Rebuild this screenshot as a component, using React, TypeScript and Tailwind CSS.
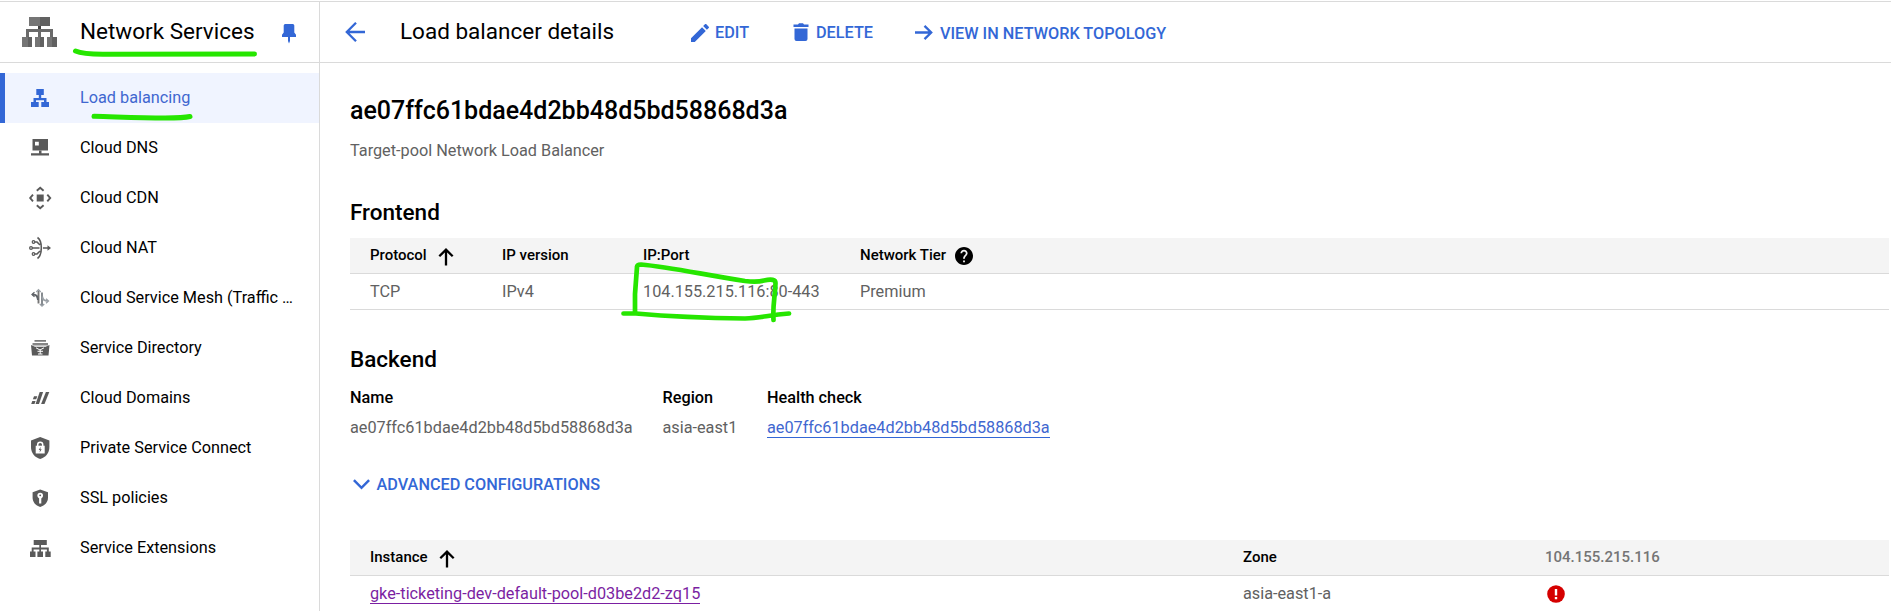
import type { ReactNode } from "react";

const GREY = "#5a5a5a";

function HeaderLogo() {
  return (
    <svg width="36" height="32" viewBox="0 0 36 32" shapeRendering="crispEdges">
      <path d="M6.500 1H17.500V10H6.500z" fill="#757575" />
      <path d="M17.500 1H28V10H17.500z" fill="#616161" />
      <path d="M16 10h3v3h-3z" fill="#424242" />
      <path d="M4 13h27v8h-3v-5H19v5h-3v-5H7v5H4z" fill="#6a6a6a" />
      <path d="M0 21h6v10H0zM13 21h5v10H13zM25 21h5v10H25z" fill="#757575" />
      <path d="M6 21h4v10H6zM18 21h4v10H18zM30 21h5v10H30z" fill="#616161" />
    </svg>
  );
}

function PinIcon() {
  return (
    <svg width="14" height="20" viewBox="0 0 14 20" fill="#3367d6">
      <path d="M3.200 0H10.800Q12.300 0 12.300 1.500V8.500L14 10.700V13H8V17L7 19.500L6 17V13H0V10.700L1.700 8.500V1.500Q1.700 0 3.200 0z" />
    </svg>
  );
}

function Glyph({ children }: { children: ReactNode }) {
  return (
    <svg className="shrink-0" width="24" height="24" viewBox="0 0 24 24" fill={GREY}>
      {children}
    </svg>
  );
}

const items: { label: string; icon: ReactNode }[] = [
  {
    label: "Load balancing",
    icon: (
      <g fill="#3367d6">
        <path d="M8.300 3h7.500v6H13.200v3h5.300v4h2.500v5h-7.700v-5h2.700v-1.800H8V16h2.700v5H3v-5h2.500v-4h5.300V9H8.300z" />
      </g>
    ),
  },
  {
    label: "Cloud DNS",
    icon: (
      <>
        <path fillRule="evenodd" d="M4.500 3h15.500v11.500H4.500zM7 5.700v3.800h3.800V5.700z" />
        <path d="M11 14.500h2.500V17.300H21v2.200H3v-2.200h8z" />
      </>
    ),
  },
  {
    label: "Cloud CDN",
    icon: (
      <>
        <path d="M8.700 8.500h7v7h-7z" />
        <path d="M8.800 4.800L12.200 1.800L15.600 4.800M8.800 19.200l3.400 3L15.600 19.200M5 8.700L2.200 12L5 15.300M19.300 8.700L22.200 12L19.300 15.300" fill="none" stroke={GREY} strokeWidth="1.900" />
      </>
    ),
  },
  {
    label: "Cloud NAT",
    icon: (
      <>
        <path d="M9.500 1.500C14.600 5 14.600 19 9.500 22.500M3 12H11.500M15 12h6M5.500 6H9l3 3M5.500 18H9l3-3" fill="none" stroke={GREY} strokeWidth="1.600" />
        <path d="M19.500 9.300l3.500 2.700-3.500 2.700z" />
        <circle cx="3" cy="12" r="2" />
        <circle cx="5.500" cy="6" r="1.900" />
        <circle cx="5.500" cy="18" r="1.900" />
        <circle cx="3" cy="12" r="0.700" fill="#fff" />
        <circle cx="5.500" cy="6" r="0.700" fill="#fff" />
        <circle cx="5.500" cy="18" r="0.700" fill="#fff" />
      </>
    ),
  },
  {
    label: "Cloud Service Mesh (Traffic …",
    icon: (
      <g fill="none" strokeWidth="1.900">
        <path d="M10.500 4.500V17.500" stroke="#757575" />
        <path d="M8.300 6l2.200-2.300L12.700 6" stroke="#9aa0a6" strokeWidth="1.300" />
        <path d="M4.500 8.500C8.500 8.500 9.500 10 10 14" stroke="#5f6368" />
        <path d="M6.500 6.300L4 8.500l2.500 2.300" stroke="#5f6368" strokeWidth="1.300" />
        <path d="M14 6.500V19.500" stroke="#80868b" />
        <path d="M11.800 18L14 20.200 16.200 18" stroke="#9aa0a6" strokeWidth="1.300" />
        <path d="M14.300 10.500C14.500 13.500 16.500 15 20 15" stroke="#9aa0a6" />
        <path d="M18 12.700L20.500 15 18 17.200" stroke="#9aa0a6" strokeWidth="1.300" />
      </g>
    ),
  },
  {
    label: "Service Directory",
    icon: (
      <>
        <path d="M6.500 4.200h11.500v1.400H6.500z" />
        <path d="M4.500 7h15.500v2.500H4.500z" fill="#858585" />
        <path d="M3 9l4 1.700h10.500L21.500 9l-1 10.500H4z" />
        <path d="M8 11.800l4 2.200 4-2.200M9.500 15.300h5.500M10 18h4.500M12.200 13.500v4.500" fill="none" stroke="#fff" strokeWidth="1" />
      </>
    ),
  },
  {
    label: "Cloud Domains",
    icon: (
      <>
        <path d="M11.700 6h3.400L11 18H7.600z" />
        <path d="M17.900 6h3.400L16.500 18h-3.400z" />
        <path d="M6 10.200h3.300L8.200 13.200H4.900zM4.300 15h3.300L6.500 18H3.200z" />
      </>
    ),
  },
  {
    label: "Private Service Connect",
    icon: (
      <>
        <path d="M12.200 1L21.400 4.500V11C21.400 17 17.500 21.500 12.200 23C6.800 21.500 3 17 3 11V4.500z" />
        <path d="M7.700 9.700h9v7.800h-9z" fill="#fff" />
        <path d="M9.700 10V8.500C9.700 5.500 14.700 5.500 14.700 8.500V10" fill="none" stroke="#fff" strokeWidth="1.500" />
        <path d="M12.700 10.700L10.700 14h1.300l-.4 2.600L13.700 13.200h-1.300z" />
      </>
    ),
  },
  {
    label: "SSL policies",
    icon: (
      <>
        <path d="M12.200 3.500L20 6.300V11.500C20 16 17 19.600 12.200 21C7.400 19.600 4.600 16 4.600 11.500V6.300z" />
        <circle cx="12.200" cy="9.600" r="2.800" fill="#fff" />
        <path d="M11.100 10h2.200v7.500h-2.200z" fill="#fff" />
        <circle cx="12.200" cy="9.300" r="0.900" />
      </>
    ),
  },
  {
    label: "Service Extensions",
    icon: (
      <path d="M5.700 4H18.800v5H13v2.500h7.800v4h1.900V21h-5.400v-5.500h1.600v-2H13v2h2V21H9.400v-5.500h1.900v-2H5.600v2h1.900V21H2v-5.500h1.700v-4h7.600V9H5.700z" />
    ),
  },
];

function UpArrow() {
  return (
    <svg width="16" height="18" viewBox="0 0 16 18" fill="none" stroke="#000" strokeWidth="2.300">
      <path d="M8 17.500V2M1.300 8.300L8 1.700L14.700 8.300" />
    </svg>
  );
}

function HelpIcon() {
  return (
    <svg width="18" height="18" viewBox="2 2 20 20">
      <path d="M12 2C6.480 2 2 6.480 2 12s4.480 10 10 10 10-4.480 10-10S17.520 2 12 2zm1 17h-2v-2h2v2zm2.070-7.750l-.9.920C13.450 12.900 13 13.500 13 15h-2v-.5c0-1.100.45-2.100 1.170-2.830l1.240-1.260c.37-.36.59-.86.59-1.410 0-1.100-.9-2-2-2s-2 .9-2 2H8c0-2.210 1.790-4 4-4s4 1.790 4 4c0 .88-.36 1.680-.93 2.250z" />
    </svg>
  );
}

function Sidebar() {
  return (
    <nav className="w-80 shrink-0 border-r border-[#dadada]">
      <div className="flex h-[61px] items-start border-b border-[#dadada]">
        <div className="ml-[22px] mt-[14px] w-[58px]">
          <HeaderLogo />
        </div>
        <h1 className="mt-[13px] w-[203px] text-[22.5px] leading-8">Network Services</h1>
        <div className="-ml-px mt-[22px]">
          <PinIcon />
        </div>
      </div>
      <ul className="pt-2.5">
        {items.map((it, i) => (
          <li
            key={it.label}
            className={
              i === 0
                ? "flex h-[50px] items-center border-l-[5px] border-[#3367d6] bg-[#f0f4ff] pl-[23px] text-[#3f67d0]"
                : "flex h-[50px] items-center pl-7"
            }
          >
            <Glyph>{it.icon}</Glyph>
            <span className="ml-7 whitespace-nowrap">{it.label}</span>
          </li>
        ))}
      </ul>
    </nav>
  );
}

function Toolbar() {
  return (
    <header className="flex h-[61px] border-b border-[#dadada] font-medium text-[#3367d6]">
      <svg className="ml-[25px] mt-5" width="20" height="20" viewBox="0 0 20 20" fill="none" stroke="#3367d6" strokeWidth="2.300">
        <path d="M20 10H2M11 .8L1.800 10L11 19.200" />
      </svg>
      <h2 className="ml-[35px] mt-[13px] w-[291px] text-[22.5px] leading-8 font-normal text-black">Load balancer details</h2>
      <svg className="mt-[22px]" width="18" height="18" viewBox="3 3 18 18" fill="#3367d6">
        <path d="M3 17.250V21h3.750L17.810 9.940l-3.750-3.750L3 17.250zM20.710 7.040c.39-.39.39-1.020 0-1.410l-2.340-2.340c-.39-.39-1.020-.39-1.410 0l-1.830 1.830 3.750 3.750 1.830-1.830z" />
      </svg>
      <span className="ml-1.5 mt-[21px] w-[78px] leading-5">EDIT</span>
      <svg className="mt-[21px]" width="16" height="18" viewBox="0 0 16 18" fill="#3367d6">
        <path d="M1.500 5.500h13V16q0 2-2 2h-9q-2 0-2-2zM.5 1.500h4.500l1-1.200h4l1 1.200H15.500V4H.5z" />
      </svg>
      <span className="ml-[7px] mt-[21px] w-[99px] leading-5">DELETE</span>
      <svg className="mt-[23px]" width="18" height="15" viewBox="0 0 18 15" fill="none" stroke="#3367d6" strokeWidth="2.300">
        <path d="M0 7.500H16M9.500 .9L16.200 7.500L9.500 14.100" />
      </svg>
      <span className="ml-[7px] mt-[22px] leading-5">VIEW IN NETWORK TOPOLOGY</span>
    </header>
  );
}

function Marks() {
  return (
    <svg className="pointer-events-none absolute left-0 top-0" width="900" height="340" fill="none" stroke="#26e600" strokeWidth="5" strokeLinecap="round" strokeLinejoin="round">
      <path d="M75.500 51C81 53.500 92 54.300 105 54.200L254.500 54" />
      <path d="M94 116.300C120 117 140 118 165 118C178 118 184 118 190 116.500" />
      <path strokeWidth="4.700" d="M635 312V294L637 267Q637 264.500 641 264.500C670 267 705 275 745 281Q757 282.500 764 280.500Q775.500 278 775.500 283C775 298 772.500 305 773.500 320" />
      <path strokeWidth="4.700" d="M623.500 313.500H636C670 316.500 705 318 745 318.500C762 318 768 315 789 313.500" />
    </svg>
  );
}

export default function App() {
  return (
    <div className="relative h-[611px] w-full overflow-hidden bg-white font-[Roboto,sans-serif] text-[16.25px] leading-6 text-black">
      <div className="mt-px flex h-[610px] border-t border-[#dadada]">
        <Sidebar />
        <div className="min-w-0 flex-1">
          <Toolbar />
          <main className="pl-[30px]">
            <h2 className="pt-8 text-[25px] leading-8 font-medium">ae07ffc61bdae4d2bb48d5bd58868d3a</h2>
            <p className="mt-3 text-[#616161]">Target-pool Network Load Balancer</p>
            <h3 className="mt-[33px] text-[22.5px] leading-8 font-medium">Frontend</h3>

            <div className="mr-0.5 mt-[10px]">
              <div className="flex h-9 border-b border-[#dadada] bg-[#f4f4f4] pl-5 pt-[5px] text-[15px] font-medium">
                <div className="flex w-[132px]">
                  Protocol
                  <span className="ml-[11.5px] mt-[5px]"><UpArrow /></span>
                </div>
                <div className="w-[141px]">IP version</div>
                <div className="w-[217px]">IP:Port</div>
                <div className="flex">
                  Network Tier
                  <span className="ml-[9px] mt-1"><HelpIcon /></span>
                </div>
              </div>
              <div className="flex h-9 border-b border-[#dadada] pl-5 pt-1.5 text-[#616161]">
                <div className="w-[132px]">TCP</div>
                <div className="w-[141px]">IPv4</div>
                <div className="w-[217px]">104.155.215.116:80-443</div>
                <div>Premium</div>
              </div>
            </div>

            <h3 className="mt-[33px] text-[22.5px] leading-8 font-medium">Backend</h3>
            <div className="mt-[11px] flex">
              <div className="w-[312.5px]">
                <div className="font-medium">Name</div>
                <div className="mt-1.5 text-[#616161]">ae07ffc61bdae4d2bb48d5bd58868d3a</div>
              </div>
              <div className="w-[104.5px]">
                <div className="font-medium">Region</div>
                <div className="mt-1.5 text-[#616161]">asia-east1</div>
              </div>
              <div>
                <div className="font-medium">Health check</div>
                <a className="mt-1.5 block h-[22px] border-b border-[#3367d6] text-[#3f67d0]">ae07ffc61bdae4d2bb48d5bd58868d3a</a>
              </div>
            </div>

            <div className="mt-[33px] flex h-6 items-start font-medium text-[#3367d6]">
              <svg className="ml-[3px] mt-[6px]" width="17" height="11" viewBox="0 0 17 11" fill="none" stroke="#3367d6" strokeWidth="2.500">
                <path d="M.9 1.200L8.500 8.800L16.100 1.200" />
              </svg>
              <span className="ml-[6.5px]">ADVANCED CONFIGURATIONS</span>
            </div>

            <div className="mr-0.5 mt-[43px]">
              <div className="flex h-9 border-b border-[#dadada] bg-[#f4f4f4] pl-5 pt-[5px] text-[15px] font-medium">
                <div className="flex w-[873px]">
                  Instance
                  <span className="ml-[11.5px] mt-[5px]"><UpArrow /></span>
                </div>
                <div className="w-[302px]">Zone</div>
                <div className="text-[#757575]">104.155.215.116</div>
              </div>
              <div className="flex pl-5 pt-1.5">
                <div className="w-[873px]">
                  <a className="inline-block h-[22px] border-b border-[#7b1fa2] text-[#7b1fa2]">gke-ticketing-dev-default-pool-d03be2d2-zq15</a>
                </div>
                <div className="w-[302px] text-[#616161]">asia-east1-a</div>
                <svg className="ml-0.5 mt-[3px]" width="18" height="18" viewBox="0 0 18 18">
                  <circle cx="9" cy="9" r="8.800" fill="#d50000" />
                  <path d="M7.800 4h2.400v6.500H7.800zM7.800 12h2.400v2.300H7.800z" fill="#fff" />
                </svg>
              </div>
            </div>
          </main>
        </div>
      </div>
      <Marks />
    </div>
  );
}
